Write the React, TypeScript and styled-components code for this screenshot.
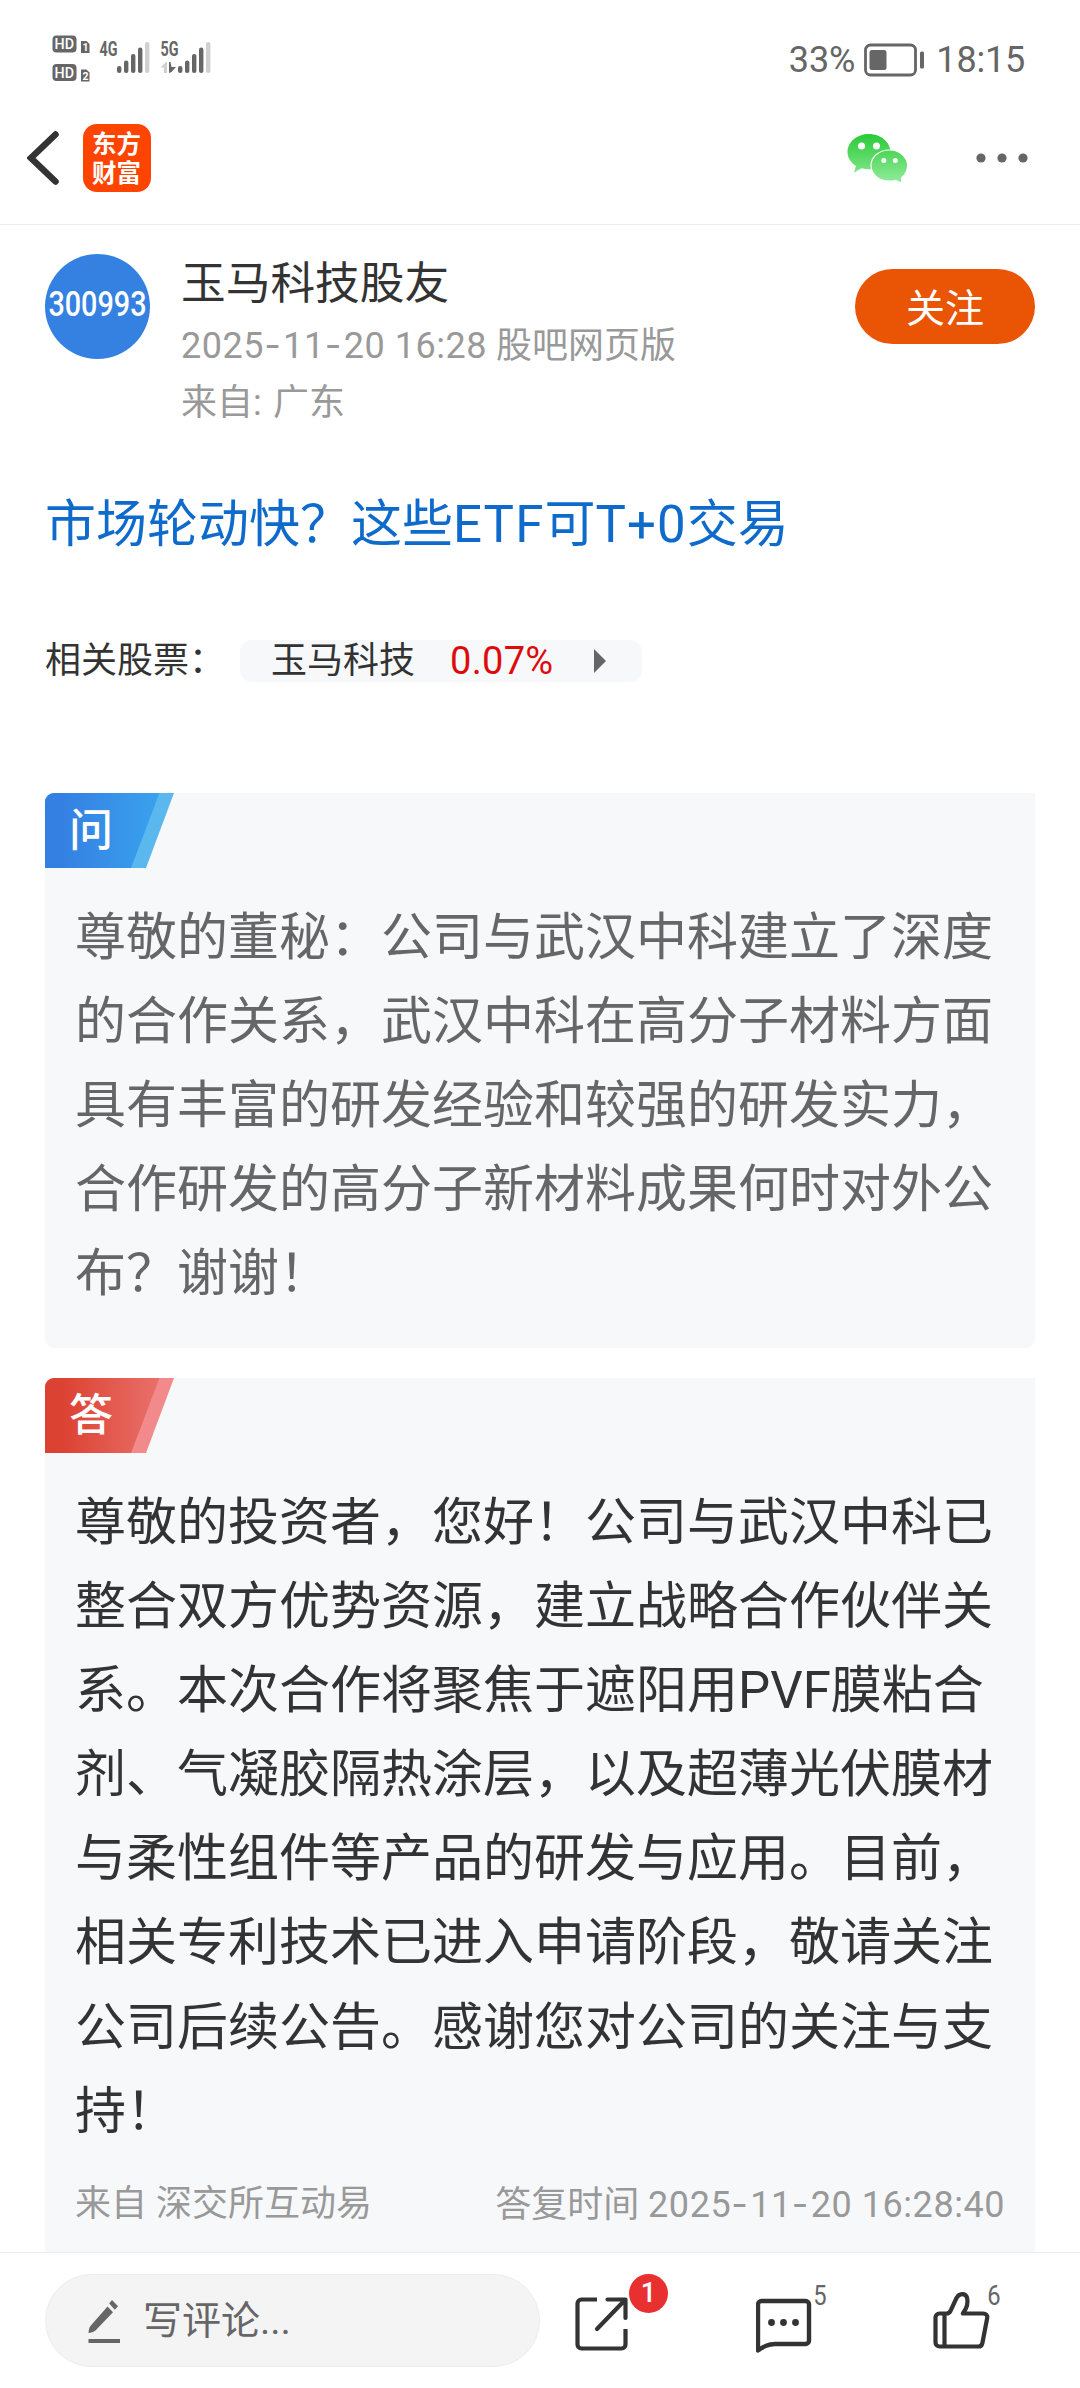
import React from "react";
import styled, { createGlobalStyle } from "styled-components";

const GlobalStyle = createGlobalStyle`
  * { box-sizing: border-box; }
  body {
    margin: 0;
    background: #fff;
    font-family: Roboto, "Noto Sans CJK SC", sans-serif;
    color: #333;
    text-spacing-trim: space-all;
  }
`;

const Page = styled.div`
  width: 1080px;
  height: 2388px;
  display: flex;
  flex-direction: column;
  overflow: hidden;
  background: #fff;
`;

const StatusBar = styled.header`
  height: 110px;
  padding: 8px 55px 0 52px;
  display: flex;
  align-items: center;
  justify-content: space-between;
  color: #666;
`;

const StatusRight = styled.div`
  display: flex;
  align-items: center;
  padding-top: 1px;
  font-size: 36px;
  line-height: 44px;
`;

const Percent = styled.span`
  letter-spacing: -0.1px;
  margin-right: 9px;
`;

const Clock = styled.time`
  margin-left: 11px;
  letter-spacing: -0.2px;
`;

const NavBar = styled.nav`
  height: 115px;
  padding: 5px 52px 23px 27px;
  display: flex;
  align-items: center;
  border-bottom: 1px solid #ececec;
`;

const AppLogo = styled.div`
  width: 68px;
  height: 68px;
  margin-left: 24px;
  padding: 4px 9px 0;
  border-radius: 14px;
  background: #ff4400;
  color: #fff;
  font: 700 24.5px/29px "Noto Sans CJK SC", sans-serif;
  word-break: break-all;
`;

const NavActions = styled.div`
  margin-left: auto;
  display: flex;
  align-items: center;
  gap: 68px;
`;

const Content = styled.main`
  flex: 1;
  min-height: 0;
  overflow: hidden;
  padding: 29px 45px 0;
`;

const Author = styled.section`
  display: flex;
  align-items: flex-start;
`;

const Avatar = styled.div`
  width: 105px;
  height: 105px;
  border-radius: 50%;
  background: #3481e2;
  color: #fff;
  display: flex;
  align-items: center;
  justify-content: center;
`;

const AvatarCode = styled.span`
  font-size: 28.8px;
  font-weight: 500;
  line-height: 34px;
  margin-top: -5px;
  transform: scaleY(1.22);
`;

const AuthorInfo = styled.div`
  margin-left: 31px;
  flex: 1;
`;

const AuthorName = styled.div`
  font-size: 44.7px;
  line-height: 60px;
`;

const AuthorMeta = styled.div<{ $top: number }>`
  margin-top: ${(p) => p.$top}px;
  font-size: 36px;
  line-height: 48px;
  color: #999;
  white-space: nowrap;
`;

const DateSpan = styled.span`
  letter-spacing: 0.55px;
`;

const Hyphen = styled.span`
  font-family: Inter, sans-serif;
  letter-spacing: 2.4px;
`;

const FollowButton = styled.button`
  width: 180px;
  height: 75px;
  margin-top: 15px;
  padding: 0 0 3px;
  border: 0;
  border-radius: 38px;
  background: #e95504;
  color: #fff;
  font: 400 39px/56px "Noto Sans CJK SC", sans-serif;
`;

const Headline = styled.a`
  display: block;
  margin-top: 66px;
  font-size: 51px;
  line-height: 64px;
  color: #0f6bcb;
`;

const Latin = styled.span`
  letter-spacing: 1.1px;
`;

const Related = styled.section`
  margin: 83px 0 111px;
  height: 42px;
  display: flex;
  align-items: center;
  font-size: 36px;
  line-height: 42px;
`;

const StockChip = styled.div`
  width: 402px;
  height: 42px;
  margin-left: 15px;
  padding: 0 36px 0 31px;
  border-radius: 12px;
  background: #f7f8fa;
  display: flex;
  align-items: center;
`;

const Change = styled.span`
  margin-left: 35px;
  margin-right: auto;
  color: #dc0c0c;
  font-size: 38px;
  letter-spacing: 0.3px;
`;

const Card = styled.article`
  background: #f7f8fa;
  border-radius: 9px 0 9px 9px;
  padding-bottom: 31.500px;

  & + & {
    margin-top: 30px;
  }
`;

const TagBox = styled.div`
  display: grid;
  width: 129px;
  height: 75px;
  border-top-left-radius: 9px;
  overflow: hidden;
  & > * {
    grid-area: 1 / 1;
  }
`;

const TagLabel = styled.span`
  z-index: 1;
  padding-left: 24px;
  font: 500 44px/68px "Noto Sans CJK SC", sans-serif;
  color: #fff;
`;

const Passage = styled.p<{ $color: string }>`
  margin: 0;
  padding: 28px 30px 0;
  font-size: 51px;
  line-height: 84.1px;
  color: ${(p) => p.$color};
`;

const Source = styled.footer`
  display: flex;
  justify-content: space-between;
  padding: 26px 30px 0;
  font-size: 36px;
  line-height: 48px;
  color: #999;
`;

const BottomBar = styled.footer`
  height: 136px;
  padding: 21px 45px 0;
  border-top: 1px solid #ececec;
  background: #fff;
  display: flex;
  align-items: flex-start;
`;

const CommentInput = styled.div`
  width: 495px;
  height: 93px;
  padding-left: 42px;
  border: 1px solid #ececec;
  border-radius: 47px;
  background: #f4f4f4;
  color: #666;
  display: flex;
  align-items: center;
  gap: 22px;
  font-size: 39px;
  line-height: 50px;
`;

const Action = styled.button<{ $left: number; $top: number }>`
  position: relative;
  padding: 0;
  border: 0;
  background: none;
  width: 56px;
  height: 60px;
  margin: ${(p) => p.$top}px 0 0 ${(p) => p.$left}px;
  svg {
    display: block;
  }
`;

const Badge = styled.span`
  position: absolute;
  left: 54px;
  top: -20px;
  width: 39px;
  height: 39px;
  border-radius: 50%;
  background: #e83030;
  color: #fff;
  font: 500 27px/39px Roboto, sans-serif;
  text-align: center;
`;

const Count = styled.span<{ $left: number; $top: number }>`
  position: absolute;
  left: ${(p) => p.$left}px;
  top: ${(p) => p.$top}px;
  color: #666;
  font: 400 28px/30px Roboto, sans-serif;
  transform: scaleX(0.85);
`;

const DateText = ({ value }: { value: string }) => (
  <DateSpan>
    {value.split("-").map((part, i) => (
      <React.Fragment key={i}>
        {i > 0 && <Hyphen>-</Hyphen>}
        {part}
      </React.Fragment>
    ))}
  </DateSpan>
);

const bars = [
  { x: 0, y: 24 },
  { x: 7, y: 18.5 },
  { x: 14, y: 12 },
  { x: 21, y: 5.5 },
  { x: 28, y: 0 },
];

const Bars = ({ x }: { x: number }) => (
  <g transform={`translate(${x} 7)`}>
    {bars.map((b, i) => (
      <rect
        key={i}
        x={b.x}
        y={b.y}
        width="4.4"
        height={31 - b.y}
        rx="2.1"
        fill={i === 4 ? "#d0d0d0" : "#666"}
      />
    ))}
  </g>
);

const HdMark = ({ y, sim }: { y: number; sim: string }) => (
  <g transform={`translate(0 ${y})`} fontFamily="Roboto, sans-serif" fill="#fff">
    <rect x="0.5" y="0.5" width="24" height="17" rx="4" fill="#666" />
    <text x="2.6" y="14" fontSize="14.5" fontWeight="500" textLength="19.5" lengthAdjust="spacingAndGlyphs">
      HD
    </text>
    <path d="M29 6h5.500l3 3v9h-8.500z" fill="#666" />
    <text x="30.4" y="16" fontSize="10.500" fontWeight="700">
      {sim}
    </text>
  </g>
);

const SignalIcons = () => (
  <svg width="162" height="48" viewBox="0 0 162 48">
    <HdMark y={0} sim="1" />
    <HdMark y={28.500} sim="2" />
    <g fontFamily="Roboto, sans-serif" fontSize="20" fontWeight="700" fill="#666">
      <text x="47.500" y="21" textLength="18" lengthAdjust="spacingAndGlyphs">4G</text>
      <text x="108.500" y="21" textLength="18" lengthAdjust="spacingAndGlyphs">5G</text>
    </g>
    <Bars x={65} />
    <path d="M108.500 32.500l5.500-5.500h1v11h-3.200v-5.500z" fill="#d0d0d0" />
    <path d="M117 27h1.500l1 5h4.500l-4.500 5l-2.500 1z" fill="#666" />
    <Bars x={126} />
  </svg>
);

const BatteryIcon = () => (
  <svg width="61" height="34" viewBox="0 0 61 34">
    <rect x="1.500" y="2" width="50" height="30" rx="5" fill="none" stroke="#666" strokeWidth="2.800" />
    <rect x="5.500" y="7" width="17" height="20" rx="2.500" fill="#666" />
    <rect x="56" y="8.500" width="4" height="17" rx="1.500" fill="#666" />
  </svg>
);

const BackIcon = () => (
  <svg width="32" height="54" viewBox="0 0 32 54">
    <path d="M28.500 3.500L4 27l24.500 23.500" fill="none" stroke="#333" strokeWidth="6.500" strokeLinecap="round" />
  </svg>
);

const WechatIcon = () => (
  <svg width="61" height="50" viewBox="0 0 61 50">
    <defs>
      <linearGradient id="wx" x1="0" y1="0" x2="0" y2="50" gradientUnits="userSpaceOnUse">
        <stop offset="0.05" stopColor="#2dcb3a" />
        <stop offset="1" stopColor="#92ec9b" />
      </linearGradient>
    </defs>
    <path
      d="M22 1C10 1 0.500 9 0.500 19c0 5.800 3.200 10.500 8.500 14L7 39.500l7.500-4.200c2.500.7 5 1 7.500 1c12 0 21.500-7.800 21.500-17.300S34 1 22 1z"
      fill="url(#wx)"
    />
    <path
      d="M42.300 17c-10.200 0-18.300 6.900-18.300 15.600s8.100 15.600 18.300 15.600c2.200 0 4.300-.3 6.300-.9l6 3v-5.600c3.700-3 6-7.200 6-12.100C60.600 23.900 52.500 17 42.300 17z"
      fill="url(#wx)"
      stroke="#fff"
      strokeWidth="1.200"
    />
    <circle cx="14.500" cy="13" r="3.500" fill="#fff" />
    <circle cx="29.500" cy="13" r="3.500" fill="#fff" />
    <circle cx="36.800" cy="27.500" r="2.500" fill="#fff" />
    <circle cx="48.300" cy="27.500" r="2.500" fill="#fff" />
  </svg>
);

const MoreIcon = () => (
  <svg width="52" height="10" viewBox="0 0 52 10" fill="#666">
    <circle cx="5" cy="5" r="4.600" />
    <circle cx="26" cy="5" r="4.600" />
    <circle cx="47" cy="5" r="4.600" />
  </svg>
);

const PencilIcon = () => (
  <svg width="33" height="46" viewBox="0 0 33 46" fill="#666">
    <path d="M19.500 8.500l5.500 5.800L7.500 32.500C5.500 34 3 34.600.5 35c.2-2.800.6-5.200 2.200-7.200z" />
    <path d="M24 2l6 6.300-3.200 3.500-5.600-6.300z" />
    <rect x="0.500" y="41" width="31.500" height="4" />
  </svg>
);

const ShareIcon = () => (
  <svg width="54" height="54" viewBox="0 0 54 54" fill="none" stroke="#333" strokeWidth="4.200">
    <path d="M22 2.500H6.500a4 4 0 0 0-4 4v41a4 4 0 0 0 4 4h40a4 4 0 0 0 4-4V32" />
    <path d="M32.500 2.500h18v18.500M22 32L49 4" strokeLinecap="round" strokeLinejoin="round" />
  </svg>
);

const CommentIcon = () => (
  <svg width="56" height="56" viewBox="0 0 56 56" fill="none" stroke="#333" strokeWidth="4.400" strokeLinejoin="round">
    <path d="M5.500 3h44a3.500 3.500 0 0 1 3.500 3.500v36a3.500 3.500 0 0 1-3.500 3.500H19c-7 0-11 2.500-17 6.500v-46A3.500 3.500 0 0 1 5.500 3z" />
    <g fill="#333" stroke="none">
      <circle cx="15.500" cy="24.500" r="3.400" />
      <circle cx="27.500" cy="24.500" r="3.400" />
      <circle cx="39.500" cy="24.500" r="3.400" />
    </g>
  </svg>
);

const ThumbIcon = () => (
  <svg width="58" height="58" viewBox="0 0 58 58" fill="none" stroke="#333" strokeWidth="4.200" strokeLinejoin="round">
    <path d="M11.500 22.500h2c2 0 3-.6 3.800-2.200L23.500 7c2.600-5.200 9-5.200 10.500-.5c1.300 4.500.4 10-4.200 16H50c3.200 0 4.700 2 4.200 4.500l-4.800 25c-.5 2.500-1.800 3.500-4 3.500H6.500a4 4 0 0 1-4-4V26.500a4 4 0 0 1 4-4zM11.500 22.500v33" />
  </svg>
);

interface TagProps {
  label: string;
  from: string;
  to: string;
  edge: string;
}

const Tag = ({ label, from, to, edge }: TagProps) => (
  <TagBox>
    <svg width="129" height="75" viewBox="0 0 129 75">
      <defs>
        <linearGradient id={"tag" + edge.slice(1)}>
          <stop offset="0.150" stopColor={from} />
          <stop offset="1" stopColor={to} />
        </linearGradient>
      </defs>
      <path d="M0 0h129l-28 75H0z" fill={edge} />
      <path d="M0 0h114.500l-28.500 75H0z" fill={`url(#tag${edge.slice(1)})`} />
    </svg>
    <TagLabel>{label}</TagLabel>
  </TagBox>
);

export default function App() {
  return (
    <Page>
      <GlobalStyle />
      <StatusBar>
        <SignalIcons />
        <StatusRight>
          <Percent>33%</Percent>
          <BatteryIcon />
          <Clock>18:15</Clock>
        </StatusRight>
      </StatusBar>
      <NavBar>
        <BackIcon />
        <AppLogo>东方财富</AppLogo>
        <NavActions>
          <WechatIcon />
          <MoreIcon />
        </NavActions>
      </NavBar>
      <Content>
        <Author>
          <Avatar>
            <AvatarCode>300993</AvatarCode>
          </Avatar>
          <AuthorInfo>
            <AuthorName>玉马科技股友</AuthorName>
            <AuthorMeta $top={7}>
              <DateText value="2025-11-20 16:28" /> 股吧网页版
            </AuthorMeta>
            <AuthorMeta $top={9}>
              来自<Latin>: </Latin>广东
            </AuthorMeta>
          </AuthorInfo>
          <FollowButton>关注</FollowButton>
        </Author>
        <Headline>
          市场轮动快？这些<Latin>ETF</Latin>可<Latin>T+0</Latin>交易
        </Headline>
        <Related>
          <span>相关股票：</span>
          <StockChip>
            <span>玉马科技</span>
            <Change>0.07%</Change>
            <svg width="12" height="24" viewBox="0 0 12 24">
              <path d="M0 0l12 12L0 24z" fill="#666" />
            </svg>
          </StockChip>
        </Related>
        <Card>
          <Tag label="问" from="#3480e2" to="#3aa2ee" edge="#5ab8ef" />
          <Passage $color="#666">
            尊敬的董秘：公司与武汉中科建立了深度的合作关系，武汉中科在高分子材料方面具有丰富的研发经验和较强的研发实力，合作研发的高分子新材料成果何时对外公布？谢谢！
          </Passage>
        </Card>
        <Card>
          <Tag label="答" from="#dc4232" to="#e9706a" edge="#f28a8b" />
          <Passage $color="#333">
            尊敬的投资者，您好！公司与武汉中科已整合双方优势资源，建立战略合作伙伴关系。本次合作将聚焦于遮阳用PVF膜粘合剂、气凝胶隔热涂层，以及超薄光伏膜材与柔性组件等产品的研发与应用。目前，相关专利技术已进入申请阶段，敬请关注公司后续公告。感谢您对公司的关注与支持！
          </Passage>
          <Source>
            <span>来自 深交所互动易</span>
            <span>
              答复时间 <DateText value="2025-11-20 16:28:40" />
            </span>
          </Source>
        </Card>
      </Content>
      <BottomBar>
        <CommentInput>
          <PencilIcon />
          <span>写评论...</span>
        </CommentInput>
        <Action $left={35} $top={20}>
          <ShareIcon />
          <Badge>1</Badge>
        </Action>
        <Action $left={125} $top={22}>
          <CommentIcon />
          <Count $left={56} $top={-15}>5</Count>
        </Action>
        <Action $left={121} $top={16}>
          <ThumbIcon />
          <Count $left={53} $top={-9}>6</Count>
        </Action>
      </BottomBar>
    </Page>
  );
}
